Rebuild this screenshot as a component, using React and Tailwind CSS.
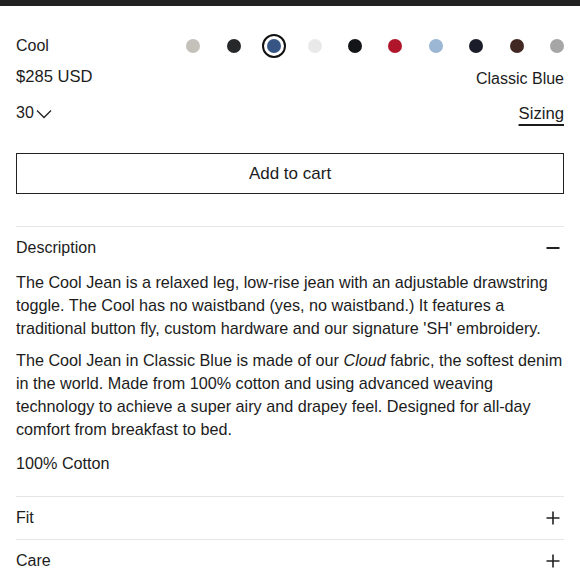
import { useState } from "react";

const swatches = [
  { name: "Stone", color: "#c3c1b9" },
  { name: "Washed Black", color: "#27282a" },
  { name: "Classic Blue", color: "#365585" },
  { name: "White", color: "#e9e9ea" },
  { name: "Black", color: "#141518" },
  { name: "Red", color: "#b0162b" },
  { name: "Light Blue", color: "#9bb7d4" },
  { name: "Navy", color: "#1b1e2a" },
  { name: "Brown", color: "#412823" },
  { name: "Grey", color: "#a6a6a6" },
];

function Plus() {
  return (
    <svg width="14" height="14" viewBox="0 0 14 14" className="shrink-0">
      <path d="M7 0.5V13.5M0.5 7H13.5" stroke="#222" strokeWidth="1.6" />
    </svg>
  );
}

function Minus() {
  return (
    <svg width="14" height="14" viewBox="0 0 14 14" className="shrink-0">
      <path d="M0.5 7H13.5" stroke="#222" strokeWidth="2" />
    </svg>
  );
}

function Chevron() {
  return (
    <svg width="16" height="10" viewBox="0 0 16 10" className="ml-[2px] mt-[2px]">
      <path d="M1 1.5L8 8.5L15 1.5" fill="none" stroke="#222" strokeWidth="1.3" />
    </svg>
  );
}

export default function App() {
  const [selected, setSelected] = useState(2);
  const [open, setOpen] = useState("description");

  return (
    <div className="min-h-[580px] bg-white text-[#1c1c1c] text-[16px]" style={{ fontFamily: '"Liberation Sans", Arial, sans-serif' }}>
      <div className="h-[6px] bg-[#222]" />

      <div className="px-4">
        {/* Nombre y colores */}
        <div className="flex items-center justify-between mt-[28px] h-[24px]">
          <span className="leading-[24px]">Cool</span>
          <div className="flex items-center gap-[16.4px] -mr-[5px]">
            {swatches.map((s, i) => (
              <button
                key={s.name}
                onClick={() => setSelected(i)}
                className={
                  "w-[24px] h-[24px] rounded-full flex items-center justify-center " +
                  (i === selected ? "border-2 border-[#111]" : "border-2 border-transparent")
                }
                aria-label={s.name}
              >
                <span className="block w-[14px] h-[14px] rounded-full" style={{ backgroundColor: s.color }} />
              </button>
            ))}
          </div>
        </div>

        {/* Precio */}
        <div className="flex justify-between items-start mt-[7px]">
          <span className="leading-[24px] text-[16.6px]">$285 USD</span>
          <span className="leading-[24px] mt-[2px]">{swatches[selected].name}</span>
        </div>

        {/* Talla */}
        <div className="flex justify-between items-start mt-[10px]">
          <button className="flex items-center leading-[24px]">
            30
            <Chevron />
          </button>
          <span className="leading-[24px] text-[16.7px] underline underline-offset-[5px] decoration-[1.5px] mt-[1px]">Sizing</span>
        </div>

        <button className="w-full h-[41px] border-[1.5px] border-[#222] mt-[27px] text-[17px]">
          Add to cart
        </button>

        {/* Descripción */}
        <div className="mt-[32px] border-t border-[#e6e6e6]">
          <button
            className="w-full flex items-center justify-between h-[41px] pt-[1px]"
            onClick={() => setOpen(open === "description" ? "" : "description")}
          >
            <span>Description</span>
            <span className="mr-[4px]">{open === "description" ? <Minus /> : <Plus />}</span>
          </button>
          {open === "description" && (
            <div className="leading-[23px] text-[16.2px] pt-[3px] pb-[21px]">
              <p>
                The Cool Jean is a relaxed leg, low-rise jean with an adjustable drawstring toggle. The Cool has no waistband (yes, no waistband.) It features a traditional button fly, custom hardware and our signature 'SH' embroidery.
              </p>
              <p className="mt-[9px]">
                The Cool Jean in Classic Blue is made of our <em>Cloud</em> fabric, the softest denim in the world. Made from 100% cotton and using advanced weaving technology to achieve a super airy and drapey feel. Designed for all-day comfort from breakfast to bed.
              </p>
              <p className="mt-[11px]">100% Cotton</p>
            </div>
          )}
        </div>

        <div className="border-t border-[#e6e6e6]">
          <button className="w-full flex items-center justify-between h-[42px]">
            <span>Fit</span>
            <span className="mr-[4px]"><Plus /></span>
          </button>
        </div>
        <div className="border-t border-[#e6e6e6]">
          <button className="w-full flex items-center justify-between h-[42px]">
            <span>Care</span>
            <span className="mr-[4px]"><Plus /></span>
          </button>
        </div>
      </div>
    </div>
  );
}
